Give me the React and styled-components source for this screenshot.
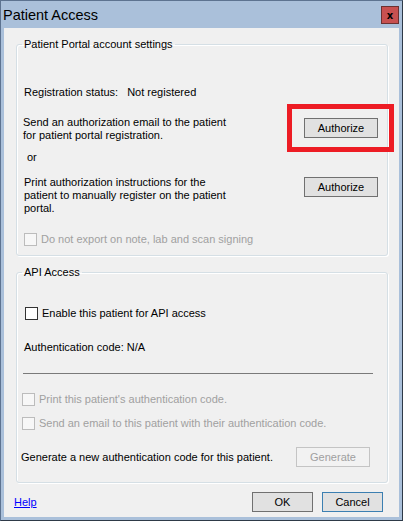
import React from 'react';
import styled, { createGlobalStyle } from 'styled-components';

const GlobalStyle = createGlobalStyle`
  html, body {
    margin: 0;
    padding: 0;
    background: #ffffff;
  }
  body {
    font-family: "Liberation Sans", Arial, sans-serif;
    font-size: 11px;
  }
`;

const Window = styled.div`
  width: 403px;
  height: 521px;
  box-sizing: border-box;
  border: 1px solid #5d7390;
  border-right-color: #2e3a48;
  border-bottom-color: #2e3a48;
  background: #aac0da;
  display: flex;
  flex-direction: column;
`;

const TitleBar = styled.div`
  height: 27px;
  flex: none;
  display: flex;
  align-items: center;
  justify-content: space-between;
  padding: 0 3px 0 2px;
`;

const Title = styled.div`
  font-family: "Liberation Sans", Arial, sans-serif;
  font-size: 14.5px;
  color: #000;
`;

const CloseButton = styled.div`
  width: 18px;
  height: 18px;
  box-sizing: border-box;
  background: #c75050;
  border: 1px solid #6b3131;
  display: flex;
  align-items: center;
  justify-content: center;
  font: bold 10px "DejaVu Sans", sans-serif;
  color: #000;
  margin-top: 1px;
`;

const Client = styled.div`
  flex: 1;
  margin: 0 3px 3px 3px;
  background: #f0f0f0;
  display: flex;
  flex-direction: column;
  padding: 10px 11px 0 12px;
`;

const Group = styled.fieldset`
  margin: ${p => p.$mt || 0}px 0 0 0;
  min-width: 0;
  border: 1px solid #d5dfe5;
  border-radius: 3px;
  box-shadow: 1px 1px 0 #ffffff, inset 1px 1px 0 #ffffff;
  padding: ${p => p.$pad};
`;

const Legend = styled.legend`
  padding: 0 2px;
  margin-left: -2px;
  line-height: 13px;
  color: #000;
`;

const Row = styled.div`
  display: flex;
  align-items: ${p => p.$align || 'center'};
  justify-content: space-between;
  margin-top: ${p => p.$mt || 0}px;
  margin-left: ${p => p.$ml || 0}px;
`;

const Text = styled.div`
  line-height: 13px;
  color: ${p => (p.$disabled ? '#a0a0a0' : '#000')};
  margin-left: ${p => p.$ml || 0}px;
`;

const Value = styled.span`
  margin-left: 9px;
`;

const Button = styled.button`
  width: ${p => p.$w || 74}px;
  height: 20px;
  flex: none;
  box-sizing: border-box;
  padding: 0;
  margin-top: ${p => p.$mt || 0}px;
  margin-right: ${p => p.$mr || 0}px;
  font-family: inherit;
  font-size: 11px;
  color: #000;
  background: #e1e1e1;
  border: 1px solid ${p => (p.$default ? '#3c7fb1' : '#707070')};

  &:disabled {
    color: #a0a0a0;
    background: #f2f2f2;
    border-color: #c4c4c4;
  }
`;

const HighlightWrap = styled.div`
  position: relative;
  margin-top: ${p => p.$mt || 0}px;
`;

const Highlight = styled.div`
  position: absolute;
  top: -14px;
  left: -17px;
  right: -16px;
  bottom: -14px;
  border: 5px solid #ed1c24;
  pointer-events: none;
`;

const CheckRow = styled.label`
  display: flex;
  align-items: center;
  gap: 4px;
  line-height: 13px;
  margin-top: ${p => p.$mt || 0}px;
  margin-left: ${p => p.$ml || 0}px;
  color: ${p => (p.$disabled ? '#a0a0a0' : '#000')};
`;

const Box = styled.span`
  width: 13px;
  height: 13px;
  box-sizing: border-box;
  flex: none;
  background: ${p => (p.$disabled ? '#f7f7f7' : '#ffffff')};
  border: 1px solid ${p => (p.$disabled ? '#bcbcbc' : '#333333')};
`;

const Divider = styled.div`
  width: 350px;
  height: 1px;
  background: #7a7a7a;
  margin: 19px 0 0 -1px;
`;

const Footer = styled.div`
  display: flex;
  align-items: center;
  justify-content: space-between;
  margin: 9px 5px 0 -2px;
`;

const HelpLink = styled.a`
  color: #0000ff;
  text-decoration: underline;
  line-height: 13px;
`;

const Actions = styled.div`
  display: flex;
  gap: 9px;
`;

function Check({ label, disabled, mt, ml }) {
  return (
    <CheckRow $disabled={disabled} $mt={mt} $ml={ml}>
      <Box $disabled={disabled} />
      {label}
    </CheckRow>
  );
}

export default function App() {
  return (
    <>
      <GlobalStyle />
      <Window>
        <TitleBar>
          <Title>Patient Access</Title>
          <CloseButton>x</CloseButton>
        </TitleBar>
        <Client>
          <Group $pad="35px 9px 9px 7px">
            <Legend>Patient Portal account settings</Legend>
            <Row>
              <Text>
                Registration status:<Value>Not registered</Value>
              </Text>
            </Row>
            <Row $align="flex-start" $mt={17}>
              <Text $ml={-1}>
                Send an authorization email to the patient<br />
                for patient portal registration.
              </Text>
              <HighlightWrap $mt={2}>
                <Button>Authorize</Button>
                <Highlight />
              </HighlightWrap>
            </Row>
            <Row $mt={9}>
              <Text $ml={3}>or</Text>
            </Row>
            <Row $align="flex-start" $mt={12}>
              <Text>
                Print authorization instructions for the<br />
                patient to manually register on the patient<br />
                portal.
              </Text>
              <Button $mt={1}>Authorize</Button>
            </Row>
            <Check disabled mt={18} label="Do not export on note, lab and scan signing" />
          </Group>

          <Group $mt={10} $pad="28px 9px 15px 7px">
            <Legend>API Access</Legend>
            <Check mt={0} ml={1} label="Enable this patient for API access" />
            <Row $mt={21}>
              <Text>Authentication code: N/A</Text>
            </Row>
            <Divider />
            <Check disabled mt={19} ml={-2} label="Print this patient's authentication code." />
            <Check disabled mt={11} ml={-2} label="Send an email to this patient with their authentication code." />
            <Row $mt={17} $ml={-3}>
              <Text>Generate a new authentication code for this patient.</Text>
              <Button disabled $mr={8}>Generate</Button>
            </Row>
          </Group>

          <Footer>
            <HelpLink href="#">Help</HelpLink>
            <Actions>
              <Button $w={61}>OK</Button>
              <Button $w={61} $default>Cancel</Button>
            </Actions>
          </Footer>
        </Client>
      </Window>
    </>
  );
}
